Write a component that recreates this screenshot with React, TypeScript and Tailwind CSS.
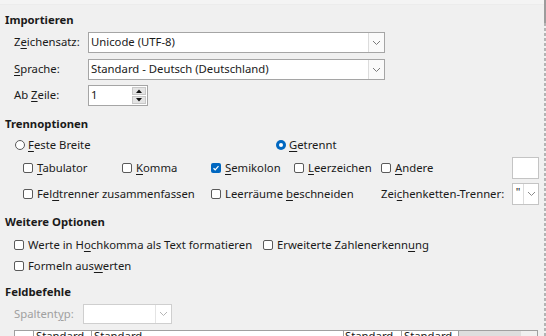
import React from "react";

const font = { fontFamily: '"Noto Sans", "Segoe UI", Arial, sans-serif' };

// mnemonic letter
function M({ c }: { c: string }) {
  return <span className="underline underline-offset-[2px] decoration-[1px]">{c}</span>;
}

function Check({ on }: { on?: boolean }) {
  if (on) {
    return (
      <span className="w-[10px] h-[10px] rounded-[2px] bg-[#0067c0] flex items-center justify-center shrink-0">
        <svg width="8" height="8" viewBox="0 0 8 8">
          <polyline points="1.5,4.2 3.2,5.8 6.5,2.2" fill="none" stroke="white" strokeWidth="1.2" />
        </svg>
      </span>
    );
  }
  return <span className="w-[10px] h-[10px] rounded-[2px] border border-[#5a5a5a] bg-white shrink-0" />;
}

function Radio({ on }: { on?: boolean }) {
  if (on) {
    return (
      <span className="w-[10px] h-[10px] rounded-full bg-[#0067c0] flex items-center justify-center shrink-0">
        <span className="w-[4px] h-[4px] rounded-full bg-white" />
      </span>
    );
  }
  return <span className="w-[10px] h-[10px] rounded-full border border-[#5a5a5a] bg-white shrink-0" />;
}

function Chevron({ color = "#7a7a7a" }: { color?: string }) {
  return (
    <svg width="9" height="6" viewBox="0 0 9 6">
      <polyline points="1,1 4.5,4.5 8,1" fill="none" stroke={color} strokeWidth="1" />
    </svg>
  );
}

function Select({ value, w }: { value: string; w: string }) {
  return (
    <div className={`${w} h-[21px] flex border border-[#a5a5a5] bg-white`}>
      <div className="flex-1 flex items-center pl-[2px] overflow-hidden whitespace-nowrap">{value}</div>
      <div className="w-[16px] flex items-center justify-center border-l border-[#dcdcdc] bg-[#fafafa]">
        <Chevron />
      </div>
    </div>
  );
}

export default function App() {
  return (
    <div style={font} className="w-[546px] h-[336px] overflow-hidden bg-[#f0f0f0] flex text-[11.3px] text-[#1a1a1a]">
      <div className="flex-1 min-w-0">
        <div className="h-[5px] bg-[#f4f4f4] border-b border-[#ececec]" />

        <div className="mt-[5px] h-[20px] flex items-center pl-[5px] font-bold">Importieren</div>

        <div className="mt-[2px] h-[21px] flex items-center">
          <div className="w-[88px] pl-[14px]">Z<M c="e" />ichensatz:</div>
          <Select value="Unicode (UTF-8)" w="w-[297px]" />
        </div>
        <div className="mt-[6px] h-[21px] flex items-center">
          <div className="w-[88px] pl-[14px]"><M c="S" />prache:</div>
          <Select value="Standard - Deutsch (Deutschland)" w="w-[297px]" />
        </div>
        <div className="mt-[5px] h-[21px] flex items-center">
          <div className="w-[88px] pl-[14px]">Ab <M c="Z" />eile:</div>
          <div className="w-[60px] h-[21px] flex border border-[#a5a5a5] bg-white">
            <div className="flex-1 flex items-center pl-[2px]">1</div>
            <div className="w-[15px] flex flex-col justify-center gap-[1px] pr-[1px]">
              <div className="h-[8px] bg-[#e4e4e4] border border-[#c8c8c8] flex items-center justify-center">
                <svg width="6" height="4" viewBox="0 0 6 4"><polygon points="0,4 3,0.5 6,4" fill="#111" /></svg>
              </div>
              <div className="h-[8px] bg-[#e4e4e4] border border-[#c8c8c8] flex items-center justify-center">
                <svg width="6" height="4" viewBox="0 0 6 4"><polygon points="0,0 3,3.5 6,0" fill="#111" /></svg>
              </div>
            </div>
          </div>
        </div>

        <div className="mt-[8px] h-[20px] flex items-center pl-[5px] font-bold">Trennoptionen</div>

        <div className="mt-[1px] h-[20px] flex items-center pl-[15px]">
          <div className="w-[261px] flex items-center gap-[3px]"><Radio /><span><M c="F" />este Breite</span></div>
          <div className="flex items-center gap-[3px]"><Radio on /><span><M c="G" />etrennt</span></div>
        </div>

        <div className="mt-[2px] h-[22px] flex items-center pl-[23px]">
          <div className="w-[99px] flex items-center gap-[4px]"><Check /><span><M c="T" />abulator</span></div>
          <div className="w-[89px] flex items-center gap-[4px]"><Check /><span><M c="K" />omma</span></div>
          <div className="w-[83px] flex items-center gap-[4px]"><Check on /><span><M c="S" />emikolon</span></div>
          <div className="w-[87px] flex items-center gap-[4px]"><Check /><span><M c="L" />eerzeichen</span></div>
          <div className="w-[131px] flex items-center gap-[4px]"><Check /><span><M c="A" />ndere</span></div>
          <div className="w-[27px] h-[22px] border border-[#c4c4c4] bg-white" />
        </div>

        <div className="mt-[4px] h-[22px] flex items-center pl-[23px]">
          <div className="w-[188px] flex items-center gap-[4px]"><Check /><span>Fel<M c="d" />trenner zusammenfassen</span></div>
          <div className="w-[170px] flex items-center gap-[4px]"><Check /><span>Leerräume <M c="b" />eschneiden</span></div>
          <div className="w-[131px] whitespace-nowrap">Zei<M c="c" />henketten-Trenner:</div>
          <div className="w-[27px] h-[22px] flex border border-[#c4c4c4] bg-white">
            <div className="w-[10px] flex items-start justify-center pt-[2px] leading-[12px]">"</div>
            <div className="flex-1 flex items-center justify-center border-l border-[#dcdcdc]"><Chevron color="#8a8a8a" /></div>
          </div>
        </div>

        <div className="mt-[7px] h-[20px] flex items-center pl-[5px] font-bold">Weitere Optionen</div>

        <div className="mt-[3px] h-[20px] flex items-center pl-[14px] whitespace-nowrap">
          <div className="w-[249px] flex items-center gap-[4px]"><Check /><span>Werte in H<M c="o" />chkomma als Text formatieren</span></div>
          <div className="flex items-center gap-[4px]"><Check /><span>Erweiterte Zahlenerkenn<M c="u" />ng</span></div>
        </div>
        <div className="mt-[1px] h-[20px] flex items-center pl-[14px]">
          <div className="flex items-center gap-[4px]"><Check /><span>Formeln aus<M c="w" />erten</span></div>
        </div>

        <div className="mt-[6px] h-[20px] flex items-center pl-[5px] font-bold">Feldbefehle</div>

        <div className="mt-[2px] h-[20px] flex items-center">
          <div className="w-[83px] pl-[14px] text-[#a0a0a0]">Spaltent<M c="y" />p:</div>
          <div className="w-[89px] h-[20px] flex border border-[#cfcfcf] bg-white">
            <div className="flex-1" />
            <div className="w-[16px] flex items-center justify-center border-l border-[#e4e4e4]"><Chevron color="#b5b5b5" /></div>
          </div>
        </div>

        <div className="mt-[6px] ml-[14px] w-[524px] flex border-t border-l border-r border-[#a0a0a0] h-[20px] leading-[10px] bg-white">
          <div className="w-[19px] border-r border-[#a0a0a0]" />
          <div className="w-[58px] pl-[2px] border-r border-[#a0a0a0]">Standard</div>
          <div className="w-[252px] pl-[2px] border-r border-[#a0a0a0]">Standard</div>
          <div className="w-[58px] pl-[1px] border-r border-[#a0a0a0]">Standard</div>
          <div className="w-[57px] pl-[2px] border-r border-[#a0a0a0]">Standard</div>
          <div className="w-[62px] bg-[#dedede]" />
          <div className="flex-1 bg-[#f0f0f0]" />
        </div>
      </div>

      <div className="w-[2px] flex flex-col">
        <div className="h-[23px] bg-[#9c9c9c]" />
        <div className="flex-1 border-l border-[#b4b4b4] border-r border-dashed" />
      </div>
    </div>
  );
}
